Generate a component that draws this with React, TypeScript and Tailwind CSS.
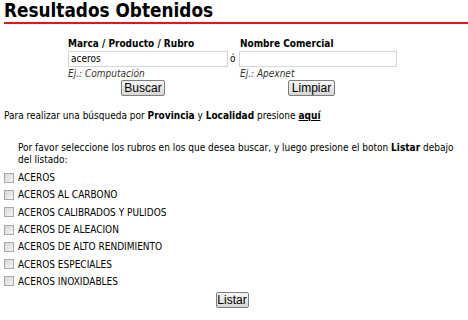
const rubros = [
  'ACEROS',
  'ACEROS AL CARBONO',
  'ACEROS CALIBRADOS Y PULIDOS',
  'ACEROS DE ALEACION',
  'ACEROS DE ALTO RENDIMIENTO',
  'ACEROS ESPECIALES',
  'ACEROS INOXIDABLES',
];

function Boton({ label, className = '' }: { label: string; className?: string }) {
  return (
    <button
      className={`h-[16px] border border-[#7e7e7e] rounded-[2px] bg-gradient-to-b from-[#f7f7f7] to-[#d6d6d6] text-[12px] leading-[14px] text-black font-['Liberation_Sans',Arial,sans-serif] ${className}`}
    >
      {label}
    </button>
  );
}

function Check({ label }: { label: string }) {
  return (
    <label className="flex items-center h-[17.3px] pl-[4px]">
      <span className="w-[10px] h-[10px] border border-[#a9a9a9] bg-gradient-to-br from-[#d8d8d8] to-[#f5f5f5] mr-[4px]" />
      <span>{label}</span>
    </label>
  );
}

export default function App() {
  return (
    <div className="w-[468px] h-[320px] bg-white text-[10px] text-black font-['DejaVu_Sans_Condensed',Tahoma,sans-serif] [font-stretch:condensed] overflow-hidden">
      <div className="pl-[4px]">
        <h1 className="text-[18.8px] leading-[22px] font-bold text-black">Resultados Obtenidos</h1>
        <div className="h-[2px] bg-[#e3161d]" />
      </div>

      <div className="flex pl-[68px] mt-[13px]">
        <div className="w-[160px] flex flex-col">
          <div className="font-bold leading-[14px]">Marca / Producto / Rubro</div>
          <div className="h-[16px] border border-[#d4d4d4] leading-[14px] pl-[2px]">aceros</div>
          <div className="italic text-[#333] leading-[13px]">Ej.: Computación</div>
          <Boton label="Buscar" className="w-[44px] ml-[53px] self-start" />
        </div>
        <div className="w-[11px] pt-[14px] pl-[2px] leading-[16px]">ó</div>
        <div className="w-[158px] flex flex-col">
          <div className="font-bold leading-[14px] pl-[1px]">Nombre Comercial</div>
          <div className="h-[16px] border border-[#d4d4d4]" />
          <div className="italic text-[#333] leading-[13px] pl-[1px]">Ej.: Apexnet</div>
          <Boton label="Limpiar" className="w-[47px] ml-[49px] self-start" />
        </div>
      </div>

      <p className="pl-[4px] mt-[14px] leading-[12px]">
        Para realizar una búsqueda por <b>Provincia</b> y <b>Localidad</b> presione{' '}
        <b className="underline">aquí</b>
      </p>

      <p className="pl-[18px] pr-[6px] mt-[20px] leading-[12px]">
        Por favor seleccione los rubros en los que desea buscar, y luego presione el boton{' '}
        <b>Listar</b> debajo del listado:
      </p>

      <div className="mt-[3px] flex flex-col">
        {rubros.map((r) => (
          <Check key={r} label={r} />
        ))}
      </div>

      <div className="flex justify-center mt-[2px] pr-[4px]">
        <Boton label="Listar" className="w-[33px]" />
      </div>
    </div>
  );
}
